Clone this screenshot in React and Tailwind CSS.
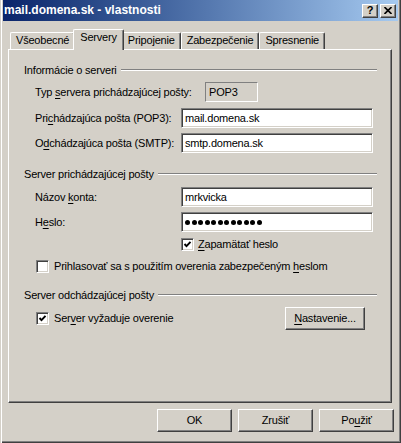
const raised =
  "border border-t-white border-l-white border-r-[#404040] border-b-[#404040] shadow-[inset_-1px_-1px_0_#808080]";
const sunken =
  "border border-t-[#808080] border-l-[#808080] border-r-white border-b-white shadow-[inset_1px_1px_0_#404040,inset_-1px_-1px_0_#d4d0c8]";

const U = ({ children }) => (
  <span className="underline decoration-1 underline-offset-[2px]">{children}</span>
);

const Checkbox = ({ checked }) => (
  <div className={`w-[13px] h-[13px] bg-white flex items-center justify-center shrink-0 ${sunken}`}>
    {checked ? (
      <svg width="9" height="9" viewBox="0 0 9 9">
        <path d="M1.5 4 L3.5 6.2 L7.5 1.8" fill="none" stroke="#000" strokeWidth="1.9" />
      </svg>
    ) : null}
  </div>
);

const GroupHeader = ({ title, className = "" }) => (
  <div className={`flex items-center h-[14px] pr-[14px] ${className}`}>
    <span className="whitespace-nowrap">{title}</span>
    <div className="flex-1 ml-[4px] h-0 border-t border-t-[#808080] border-b border-b-white" />
  </div>
);

const FieldRow = ({ label, className = "", children }) => (
  <div className={`flex items-center h-[20px] pl-[11px] ${className}`}>
    <span className="w-[146px] whitespace-nowrap">{label}</span>
    {children}
  </div>
);

const TextInput = ({ value, children }) => (
  <div className={`w-[192px] h-[20px] bg-white flex items-center pl-[3px] ${sunken}`}>
    {children ?? value}
  </div>
);

const Tab = ({ label, active }) =>
  active ? (
    <div className="relative z-10 -mx-[2px] -mb-px h-[21px] px-[6px] pt-[1px] bg-[#d4d0c8] border-t border-l border-r border-t-white border-l-white border-r-[#404040] rounded-t-[2px] shadow-[inset_-1px_0_0_#808080] flex items-start">
      {label}
    </div>
  ) : (
    <div className="h-[17px] px-[5px] border-t border-l border-r border-t-white border-l-white border-r-[#404040] rounded-t-[2px] shadow-[inset_-1px_0_0_#808080] flex items-start pt-[1px]">
      {label}
    </div>
  );

const Button = ({ children, className = "" }) => (
  <div className={`h-[23px] flex items-center justify-center bg-[#d4d0c8] ${raised} ${className}`}>
    {children}
  </div>
);

export default function App() {
  return (
    <div className="w-[401px] h-[443px] bg-[#d4d0c8] text-black text-[11px] leading-[13px] tracking-[-0.2px] font-[Tahoma,'Liberation_Sans',sans-serif] flex flex-col px-[3px] pb-[3px] shadow-[inset_1px_0_0_#d4d0c8,inset_2px_0_0_#fff,inset_-1px_-1px_0_#404040,inset_-2px_-2px_0_#808080] select-none">
      {/* title bar */}
      <div className="h-[21px] flex items-center pl-[1px] pr-[2px] bg-linear-to-r from-[#0a246a] to-[#a6caf0]">
        <span className="flex-1 text-white font-bold text-[12px] tracking-normal">mail.domena.sk - vlastnosti</span>
        <div className={`w-[16px] h-[14px] bg-[#d4d0c8] flex items-center justify-center font-bold text-[11px] ${raised}`}>
          ?
        </div>
        <div className={`w-[16px] h-[14px] ml-[2px] bg-[#d4d0c8] flex items-center justify-center ${raised}`}>
          <svg width="8" height="7" viewBox="0 0 8 7">
            <path d="M0.5 0 L7.5 7 M7.5 0 L0.5 7" stroke="#000" strokeWidth="1.6" />
          </svg>
        </div>
      </div>

      {/* tabs */}
      <div className="flex items-end h-[20px] mt-[8px] pl-[7px]">
        <Tab label="Všeobecné" />
        <Tab label="Servery" active />
        <Tab label="Pripojenie" />
        <Tab label="Zabezpečenie" />
        <Tab label="Spresnenie" />
      </div>

      {/* panel */}
      <div className="ml-[5px] w-[384px] h-[354px] flex flex-col border border-t-white border-l-white border-r-[#404040] border-b-[#404040] shadow-[inset_-1px_-1px_0_#808080] pl-[15px]">
        <GroupHeader title="Informácie o serveri" className="mt-[13px]" />
        <FieldRow
          className="mt-[5px]"
          label={
            <>
              Typ <U>s</U>ervera prichádzajúcej pošty:
            </>
          }
        >
          <div className={`ml-[24px] w-[53px] h-[20px] flex items-center pl-[3px] ${sunken} shadow-[inset_1px_1px_0_#d4d0c8]`}>
            POP3
          </div>
        </FieldRow>
        <FieldRow
          className="mt-[6px]"
          label={
            <>
              Pri<U>c</U>hádzajúca pošta (POP3):
            </>
          }
        >
          <TextInput value="mail.domena.sk" />
        </FieldRow>
        <FieldRow
          className="mt-[5px]"
          label={
            <>
              O<U>d</U>chádzajúca pošta (SMTP):
            </>
          }
        >
          <TextInput value="smtp.domena.sk" />
        </FieldRow>

        <GroupHeader title="Server prichádzajúcej pošty" className="mt-[14px]" />
        <FieldRow
          className="mt-[6px]"
          label={
            <>
              Názov <U>k</U>onta:
            </>
          }
        >
          <TextInput value="mrkvicka" />
        </FieldRow>
        <FieldRow
          className="mt-[5px]"
          label={
            <>
              H<U>e</U>slo:
            </>
          }
        >
          <TextInput>
            <div className="flex gap-[1.5px]">
              {Array.from({ length: 12 }).map((_, i) => (
                <span key={i} className="w-[5px] h-[5px] rounded-full bg-black" />
              ))}
            </div>
          </TextInput>
        </FieldRow>
        <div className="flex items-center h-[13px] mt-[6px] pl-[157px]">
          <Checkbox checked />
          <span className="ml-[4px]">
            <U>Z</U>apamätať heslo
          </span>
        </div>
        <div className="flex items-center h-[13px] mt-[9px] pl-[12px]">
          <Checkbox />
          <span className="ml-[5px]">
            Prihlasovať sa s použitím overenia zabezpečeným <U>h</U>eslom
          </span>
        </div>

        <GroupHeader title="Server odchádzajúcej pošty" className="mt-[15px]" />
        <div className="flex items-center h-[21px] mt-[6px] pl-[12px]">
          <Checkbox checked />
          <span className="ml-[5px] flex-1">
            Ser<U>v</U>er vyžaduje overenie
          </span>
          <Button className="w-[80px] h-[21px] mr-[26px]">
            <U>N</U>astavenie...
          </Button>
        </div>
      </div>

      {/* bottom buttons */}
      <div className="flex justify-end gap-[6px] mt-[6px] pr-[4px]">
        <Button className="w-[75px]">OK</Button>
        <Button className="w-[75px]">Zrušiť</Button>
        <Button className="w-[75px]">
          Po<U>u</U>žiť
        </Button>
      </div>
    </div>
  );
}
